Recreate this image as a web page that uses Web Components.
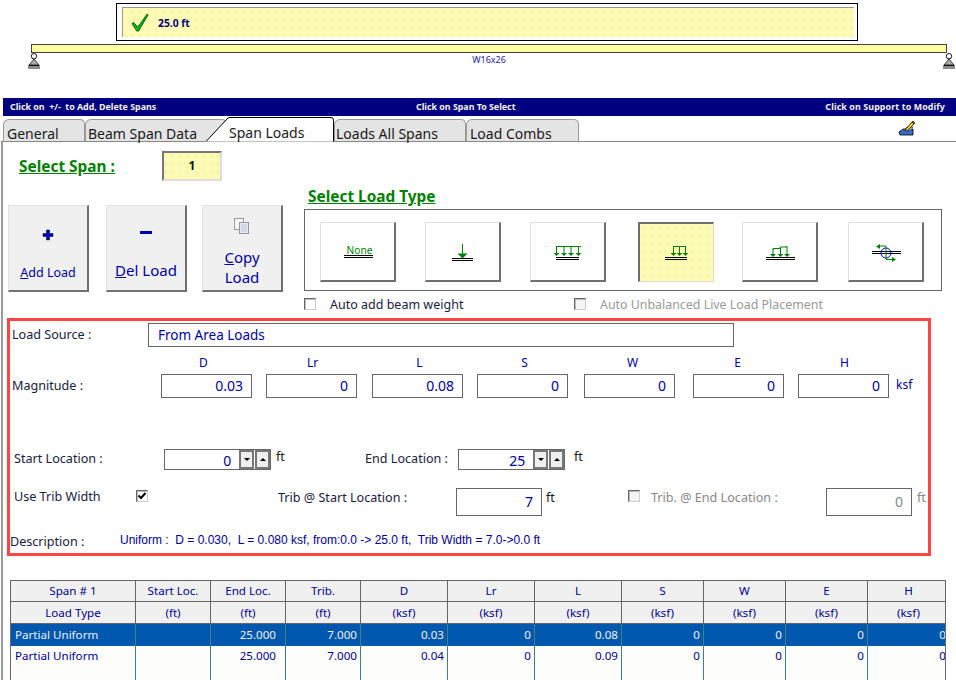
<!DOCTYPE html>
<html>
<head>
<meta charset="utf-8">
<title>Span Loads</title>
<style>
  html, body { margin: 0; background: #fff; }
  body { width: 956px; height: 680px; overflow: hidden; font-family: "Noto Sans", sans-serif; }
</style>
</head>
<body>
<span-strip>25.0 ft</span-strip>
<beam-diagram>W16x26</beam-diagram>
<hint-bar>
  <span>Click on&nbsp; +/-&nbsp; to Add, Delete Spans</span>
  <span>Click on Span To Select</span>
  <span>Click on Support to Modify</span>
</hint-bar>
<tab-strip></tab-strip>
<load-panel></load-panel>

<script>
// 1px yellow and white checker, same as the old windows pattern brush
const DITHER = `<svg class="dither" width="100%" height="100%" style="position:absolute;left:0;top:0;display:block" shape-rendering="crispEdges">
  <defs><pattern id="chk" width="2" height="2" patternUnits="userSpaceOnUse">
    <rect width="2" height="2" fill="#fff"/><rect width="1" height="1" fill="#ffff70"/><rect x="1" y="1" width="1" height="1" fill="#ffff70"/>
  </pattern></defs>
  <rect width="100%" height="100%" fill="url(#chk)"/>
</svg>`;

function el(html) {
  const t = document.createElement('template');
  t.innerHTML = html;
  return t.content.cloneNode(true);
}

class Base extends HTMLElement {
  connectedCallback() {
    if (this.shadowRoot) return;
    this.attachShadow({ mode: 'open' });
    this.shadowRoot.appendChild(el(this.render()));
  }
}

class SpanStrip extends Base {
  render() {
    return `<style>
      :host { display: block; box-sizing: border-box; width: 742px; height: 38px; margin: 3px 0 0 116px; border: 1px solid #000; padding: 3px 3px 3px 5px; }
      .in { position: relative; box-sizing: border-box; height: 30px; width: 732px; border-top: 1px solid #999; border-left: 1px solid #999; display: flex; align-items: center; padding-left: 8px; }
      svg.ck { position: relative; width: 19px; height: 19px; margin-right: 8px; }
      span { position: relative; font: bold 10.3px "Noto Sans", sans-serif; color: #000080; }
    </style>
    <div class="in">${DITHER}
      <svg class="ck" viewBox="0 0 20 20"><path d="M1 11 L3 10 L7 15 L17 1 L18 2 L8 19 L6 19 Z" fill="#00c000" stroke="#003000" stroke-width=".8"/></svg>
      <span><slot></slot></span>
    </div>`;
  }
}

class BeamDiagram extends Base {
  support(side) {
    return `<svg class="sup ${side}" viewBox="0 0 12 17" width="12" height="17">
      <circle cx="6" cy="3.2" r="2.7" fill="#fff" stroke="#000" stroke-width=".9"/>
      <path d="M6 6 L11 12 H1 Z" fill="#aaa" stroke="#000" stroke-width=".7"/>
      <path d="M.5 12.5 H11.5 M1 13 V16 M3 13 V16 M5 13 V16 M7 13 V16 M9 13 V16 M11 13 V16" stroke="#000" stroke-width=".9" fill="none"/>
    </svg>`;
  }
  render() {
    return `<style>
      :host { display: block; position: relative; height: 54px; margin-top: 3px; }
      .beam { box-sizing: border-box; margin-left: 31px; width: 916px; height: 9px; background: #ffffa0; border: 1px solid #444; }
      .lbl { text-align: center; width: 916px; margin-left: 31px; font: 9px/11px "Noto Sans", sans-serif; color: #2020b0; padding-top: 1px; }
      .sup { position: absolute; top: 9px; }
      .l { left: 28px; } .r { left: 943px; }
    </style>
    <div class="beam"></div>
    <div class="lbl"><slot></slot></div>
    ${this.support('l')}${this.support('r')}`;
  }
}

class HintBar extends Base {
  render() {
    return `<style>
      :host { display: block; margin-left: 3px; height: 18px; background: #000080; }
      .row { display: grid; grid-template-columns: 406px auto 1fr; height: 18px; align-items: center; padding: 0 11px 0 7px; font: bold 8.85px "Noto Sans", sans-serif; color: #f4f4e8; }
      ::slotted(span:nth-child(3)) { text-align: right; letter-spacing: .12px; }
    </style><div class="row"><slot></slot></div>`;
  }
}

class TabStrip extends Base {
  render() {
    const tabs = [['General', 82, 3], ['Beam Span Data', 142, 2]];
    const after = [['Loads All Spans', 132, 1], ['Load Combs', 113, 3]];
    const plain = t => `<div class="tab" style="width:${t[1]}px;padding-left:${t[2]}px">${t[0]}</div>`;
    return `<style>
      :host { display: block; position: relative; height: 25px; margin-top: 1px; box-sizing: border-box; padding-left: 3px; border-bottom: 1px solid #888; margin-left: 1px; font: 14px "Noto Sans", sans-serif; color: #1a1a1a; }
      .row { display: flex; align-items: flex-end; height: 24px; margin-left: -1px; }
      .tab { box-sizing: border-box; height: 22px; background: #e4e4e4; border: 1px solid #999; border-bottom: none; border-radius: 6px 5px 0 0; line-height: 27px; white-space: nowrap; }
      .active { position: relative; width: 128px; height: 25px; margin: 0 0 -1px -21px; z-index: 1; flex: none; }
      .active svg { position: absolute; left: 0; top: 0; }
      .active span { position: absolute; left: 23px; top: 4px; line-height: 24px; }
      .pencil { position: absolute; left: 897px; top: 3px; }
    </style>
    <div class="row">
      ${tabs.map(plain).join('')}
      <div class="active">
        <svg width="128" height="25" viewBox="0 0 128 25"><path d="M0 24.5 L22 1 Q23 .5 24 .5 H125 Q127.500 .5 127.500 3 V24.5" fill="#fff" stroke="#000"/></svg>
        <span>Span Loads</span>
      </div>
      ${after.map(plain).join('')}
    </div>
    <svg class="pencil" width="18" height="17" viewBox="0 0 18 17">
      <path d="M1 12 L5 9 H15 V15 H2 Z" fill="#3a66c4" stroke="#000" stroke-width=".8"/>
      <path d="M6 10 H13 L15 7 H9 Z" fill="#9cc" stroke="#246" stroke-width=".6"/>
      <path d="M7 10 L14 2 L16 4 L9 11 Z" fill="#ffd800" stroke="#000" stroke-width=".8"/>
      <path d="M14 2 L15 1 L17 3 L16 4 Z" fill="#c44" stroke="#000" stroke-width=".6"/>
    </svg>`;
  }
}

class LoadButton extends Base {
  render() {
    const s = this.getAttribute('size') || 13;
    return `<style>
      :host { display: block; box-sizing: border-box; width: 81px; height: 87px; background: #f0f0f0; border: 1px solid #e2e2e2; border-right: 2px solid #707070; border-bottom: 2px solid #707070; text-align: center; color: #0000a0; }
      .ico { height: ${this.getAttribute('ih') || 57}px; display: flex; align-items: center; justify-content: center; }
      .txt { font: ${s}px/20px "Noto Sans", sans-serif; }
    </style>
    <div class="ico"><slot name="icon"></slot></div>
    <div class="txt"><slot></slot></div>`;
  }
}

class TypeButton extends Base {
  render() {
    const on = this.hasAttribute('selected');
    return `<style>
      :host { display: block; position: relative; box-sizing: border-box; width: 76px; height: 60px; flex: none;
        border: 1px solid #e0e0e0; border-right: 2px solid #707070; border-bottom: 2px solid #707070; background: #fff; }
      :host([selected]) { border: 1px solid #e0e0e0; border-top: 2px solid #707070; border-left: 2px solid #707070; }
      ::slotted(svg) { display: block; position: relative; margin: ${on ? '-1px 0 0 -1px' : '0'}; }
    </style>${on ? DITHER : ''}<slot></slot>`;
  }
}

class CheckBox extends Base {
  render() {
    const on = this.hasAttribute('checked');
    return `<style>
      :host { display: inline-block; box-sizing: border-box; width: 12px; height: 12px; flex: none; background: #fff; border: 1px solid #ccc; border-top: 1px solid #666; border-left: 1px solid #666; box-shadow: inset 1px 1px 0 #bbb; }
      :host([disabled]) { background: #f4f4f4; }
      svg { display: block; }
    </style>${on ? '<svg width="10" height="10" viewBox="0 0 10 10"><path d="M1.500 4.500 L4 7 L8.500 2" fill="none" stroke="#000" stroke-width="2"/></svg>' : ''}`;
  }
}

class NumField extends Base {
  render() {
    const w = this.getAttribute('w') || 91, h = this.getAttribute('h') || 24;
    const dis = this.hasAttribute('disabled');
    return `<style>
      :host { display: block; box-sizing: border-box; width: ${w}px; height: ${h}px; flex: none; border: 1px solid #666; background: #fff; padding-right: 8px;
        font: 14px/${h - 2}px "Noto Sans", sans-serif; color: ${dis ? '#888' : '#0000a0'}; text-align: right; }
    </style><slot></slot>`;
  }
}

class SpinField extends Base {
  render() {
    return `<style>
      :host { display: flex; box-sizing: border-box; width: 107px; height: 21px; flex: none; border: 1px solid #666; background: #fff; font: 14px/21px "Noto Sans", sans-serif; color: #0000a0; }
      .v { box-sizing: border-box; width: 75px; text-align: right; padding-right: 8px; }
      .b { box-sizing: border-box; width: 15px; height: 19px; background: #eee; border: 2px solid #777; display: flex; align-items: center; justify-content: center; }
      .b + .b { margin-left: 1px; }
      i { display: block; width: 0; height: 0; border: 3px solid transparent; }
      .dn i { border-top-color: #000; border-bottom: 0; }
      .up i { border-bottom-color: #000; border-top: 0; }
    </style>
    <div class="v"><slot></slot></div>
    <div class="b dn"><i></i></div><div class="b up"><i></i></div>`;
  }
}

class LoadForm extends Base {
  render() {
    const heads = [['D', -3], ['Lr', 1], ['L', 2], ['S', 2], ['W', 3], ['E', -1], ['H', 1]];
    const vals = ['0.03', '0', '0.08', '0', '0', '0', '0'];
    const tracks = '151px 105px 106px 105px 107px 109px 105px 98px auto';
    return `<style>
      :host { display: block; box-sizing: border-box; width: 924px; height: 238px; margin: 7px 0 0 4px; border: 3px solid #ff4444; font: 12.6px "Noto Sans", sans-serif; color: #1a1a40; }
      .row { display: flex; align-items: center; }
      .src { margin-top: 2px; height: 24px; padding-left: 2px; }
      .src .lb { width: 136px; margin-top: -2px; }
      .src .box { box-sizing: border-box; width: 586px; height: 24px; border: 1px solid #666; padding-left: 9px; font-size: 13.5px; line-height: 23px; color: #0000a0; }
      .mag { display: grid; grid-template-columns: ${tracks}; margin-top: 8px; }
      .mag .hd { text-align: center; width: 91px; height: 19px; line-height: 16px; color: #0000a0; font-size: 12px; }
      .mag .lb { padding-left: 2px; line-height: 24px; }
      .ksf { color: #0000a0; line-height: 22px; font-size: 12px; }
      .spin { margin-top: 51px; height: 21px; }
      .lift { margin-top: -2px; }
      .trib { margin-top: 18px; height: 28px; }
      .ft { color: #1a1a1a; }
      .off { color: #888; }
      .desc { margin-top: 15px; height: 20px; }
      .desc .d { font: 12px "Liberation Sans", sans-serif; color: #000090; white-space: pre; margin-top: -2px; }
    </style>
    <div class="row src"><div class="lb">Load Source :</div><div class="box">From Area Loads</div></div>
    <div class="mag">
      <div></div>${heads.map(h => `<div class="hd" style="margin-left:${h[1]}px">${h[0]}</div>`).join('')}<div></div>
      <div class="lb">Magnitude :</div>${vals.map(v => `<num-field>${v}</num-field>`).join('')}<div class="ksf">ksf</div>
    </div>
    <div class="row spin">
      <div class="lift" style="width:150px;padding-left:4px">Start Location :</div>
      <spin-field>0</spin-field>
      <div class="ft" style="width:89px;padding-left:5px;margin-top:-6px">ft</div>
      <div class="lift" style="width:93px">End Location :</div>
      <spin-field>25</spin-field>
      <div class="ft" style="padding-left:9px;margin-top:-6px">ft</div>
    </div>
    <div class="row trib">
      <div style="width:122px;padding-left:4px;margin-top:-12px">Use Trib Width</div>
      <check-box checked style="margin-top:-12px"></check-box>
      <div style="width:178px;margin-left:130px;margin-top:-10px">Trib @ Start Location :</div>
      <num-field w="86" h="28">7</num-field>
      <div class="ft" style="width:82px;padding-left:4px;margin-top:-10px">ft</div>
      <check-box disabled style="margin-top:-12px"></check-box>
      <div class="off" style="width:175px;margin-left:11px;margin-top:-10px">Trib. @ End Location :</div>
      <num-field w="86" h="28" disabled>0</num-field>
      <div class="off" style="padding-left:5px;margin-top:-10px">ft</div>
    </div>
    <div class="row desc"><div style="width:110px">Description :</div><div class="d">Uniform :  D = 0.030,  L = 0.080 ksf, from:0.0 -> 25.0 ft,  Trib Width = 7.0->0.0 ft</div></div>`;
  }
}

class LoadGrid extends Base {
  render() {
    const w = [125, 75, 75, 75, 87, 87, 87, 82, 82, 82, 82];
    const h1 = ['Span # 1', 'Start Loc.', 'End Loc.', 'Trib.', 'D', 'Lr', 'L', 'S', 'W', 'E', 'H'];
    const h2 = ['Load Type', '(ft)', '(ft)', '(ft)', '(ksf)', '(ksf)', '(ksf)', '(ksf)', '(ksf)', '(ksf)', '(ksf)'];
    const r1 = ['Partial Uniform', '', '25.000', '7.000', '0.03', '0', '0.08', '0', '0', '0', '0'];
    const r2 = ['Partial Uniform', '', '25.000', '7.000', '0.04', '0', '0.09', '0', '0', '0', '0'];
    const row = (cells, cls) => `<div class="r ${cls}">${cells.map((c, i) => `<div class="${i ? 'n' : 'f'}${i == 2 ? ' e' : ''}">${c}</div>`).join('')}</div>`;
    return `<style>
      :host { display: block; box-sizing: border-box; width: 936px; height: 110px; margin: 24px 0 0 7px; border: 1px solid #666; border-bottom: none; overflow: hidden; font: 11.6px "Noto Sans", sans-serif; color: #000090; background: #fdfdfb; }
      .r { display: grid; grid-template-columns: ${w.map(x => x + 'px').join(' ')}; height: 21px; line-height: 20px; }
      .r > div { box-sizing: border-box; border-right: 1px solid #408080; white-space: nowrap; }
      .h { background: #f0f0f0; text-align: center; border-bottom: 1px solid #666; line-height: 22px; }
      .h > div { border-right-color: #666; }
      .first { height: 20px; line-height: 20px; }
      .n { text-align: right; padding-right: 3px; }
      .e { padding-right: 9px; }
      .h .n { text-align: center; padding-right: 0; }
      .f { padding-left: 4px; }
      .h .f { padding-left: 0; }
      .sel { background: #0058ae; color: #f0f0f0; height: 22px; line-height: 21px; }
      .r2 { line-height: 19px; }
      .fill { height: 40px; }
    </style>
    ${row(h1, 'h first')}${row(h2, 'h')}${row(r1, 'sel')}${row(r2, 'r2')}${row(w.map(() => ''), 'fill')}`;
  }
}

class LoadPanel extends Base {
  render() {
    const dbl = (a, b, y) => `<path d="M${a} ${y}H${b}M${a} ${y + 2}H${b}" stroke="#000" stroke-width="1" fill="none"/>`;
    const arr = (x, y1, y2, hw = 3) => `<path d="M${x} ${y1}V${y2}" stroke="#008000" fill="none"/><path d="M${x - hw} ${y2 - 1}H${x + hw}L${x} ${y2 + hw - 1}Z" fill="#008000"/>`;
    const svg = inner => `<svg width="75" height="59" viewBox="0 0 75 59">${inner}</svg>`;
    return `<style>
      :host { display: block; box-sizing: border-box; height: 540px; position: relative; border-left: 2px solid #999; margin-left: 1px; font-family: "Noto Sans", sans-serif; }
      .head { font: bold 15.4px "Noto Sans", sans-serif; color: #008000; text-decoration: underline; white-space: nowrap; }
      .top { display: flex; align-items: center; height: 30px; padding: 9px 0 0 16px; }
      .top .head { width: 143px; }
      .spanbox { position: relative; box-sizing: border-box; width: 60px; height: 30px; border: 2px solid; border-color: #777 #ddd #ddd #777; text-align: center; font: bold 12px/26px "Noto Sans", sans-serif; color: #111; }
      .spanbox span { position: relative; }
      .mid { display: flex; margin-top: 8px; }
      .acts { display: flex; padding: 16px 0 0 5px; width: 301px; box-sizing: border-box; gap: 17px; height: 103px; }
      .acts load-button:nth-child(3) { margin-left: -2px; }
      .types { width: 640px; }
      .types .head { height: 20px; line-height: 16px; padding-left: 4px; }
      .tbox { box-sizing: border-box; width: 638px; height: 82px; border: 1px solid #666; display: flex; padding: 12px 0 0 15px; }
      .tbox type-button:nth-child(n+2) { margin-left: 29px; }
      .tbox type-button:nth-child(4) { margin-left: 32px; }
      .tbox type-button:nth-child(5) { margin-left: 28px; }
      .tbox type-button:nth-child(6) { margin-left: 30px; }
      .chk { display: flex; align-items: center; height: 14px; margin-top: 6px; font-size: 12.5px; color: #1a1a40; }
      .chk span { margin-left: 14px; }
      .chk .off { color: #999; font-size: 12.4px; }
    </style>
    <div class="top"><div class="head">Select Span :</div><div class="spanbox">${DITHER}<span>1</span></div></div>
    <div class="mid">
      <div class="acts">
        <load-button size="12.5">
          <svg slot="icon" width="12" height="12" viewBox="0 0 12 12"><path d="M4.500 1h3v3.500H11v3H7.500V11h-3V7.500H1v-3h3.500z" fill="#0000c0" stroke="#000" stroke-width=".5"/></svg>
          <u>A</u>dd Load
        </load-button>
        <load-button size="15" ih="54">
          <svg slot="icon" width="12" height="4" viewBox="0 0 12 4"><rect width="12" height="3" fill="#0000a8"/></svg>
          <u>D</u>el Load
        </load-button>
        <load-button size="15" ih="41">
          <svg slot="icon" width="16" height="17" viewBox="0 0 16 17"><rect x=".5" y=".5" width="9" height="11" fill="#f6f6f6" stroke="#999"/><rect x="5.500" y="4.500" width="9" height="11" fill="#e4e8f4" stroke="#999"/><path d="M7 7h6M7 9h6M7 11h6M7 13h6" stroke="#c0c8e0"/></svg>
          <u>C</u>opy<br>Load
        </load-button>
      </div>
      <div class="types">
        <div class="head">Select Load Type</div>
        <div class="tbox">
          <type-button>${svg(`<text x="25.500" y="31" font-family="Noto Sans" font-size="10.200" fill="#008000">None</text>${dbl(23, 52, 32.5)}`)}</type-button>
          <type-button>${svg(`${arr(36.5, 21, 31.5, 5)}${dbl(26, 47, 35.5)}`)}</type-button>
          <type-button>${svg(`<path d="M25 23.500H50" stroke="#008000"/>${arr(25.5, 23, 31)}${arr(33, 23, 31)}${arr(40, 23, 31)}${arr(47.5, 23, 31)}${dbl(25, 48, 34.500)}`)}</type-button>
          <type-button selected>${svg(`<path d="M34 23.500H47" stroke="#008000"/>${arr(34.500, 23, 31)}${arr(40.500, 23, 31)}${arr(46.500, 23, 31)}${dbl(26, 48, 34.500)}`)}</type-button>
          <type-button>${svg(`<path d="M30 27 V25.500 H37 V24 H44" stroke="#008000" fill="none"/>${arr(30, 26, 32)}${arr(37.5, 25, 32)}${arr(44, 23, 32)}${dbl(23, 52, 34.500)}`)}</type-button>
          <type-button>${svg(`${dbl(23, 52, 28.500)}<circle cx="37" cy="30" r="5" fill="none" stroke="#0000e0"/><path d="M37 23V36M37 23H31" stroke="#008000" fill="none"/><path d="M37 36.500H45" stroke="#008000"/><path d="M31 21L27 23.500L31 26Z" fill="#008000"/><path d="M43 34L47 36.500L43 39Z" fill="#008000"/>`)}</type-button>
        </div>
        <div class="chk">
          <check-box></check-box><span style="width:244px">Auto add beam weight</span>
          <check-box disabled></check-box><span class="off">Auto Unbalanced Live Load Placement</span>
        </div>
      </div>
    </div>
    <load-form></load-form>
    <load-grid></load-grid>`;
  }
}

customElements.define('span-strip', SpanStrip);
customElements.define('beam-diagram', BeamDiagram);
customElements.define('hint-bar', HintBar);
customElements.define('tab-strip', TabStrip);
customElements.define('load-button', LoadButton);
customElements.define('type-button', TypeButton);
customElements.define('check-box', CheckBox);
customElements.define('num-field', NumField);
customElements.define('spin-field', SpinField);
customElements.define('load-form', LoadForm);
customElements.define('load-grid', LoadGrid);
customElements.define('load-panel', LoadPanel);
</script>
</body>
</html>
